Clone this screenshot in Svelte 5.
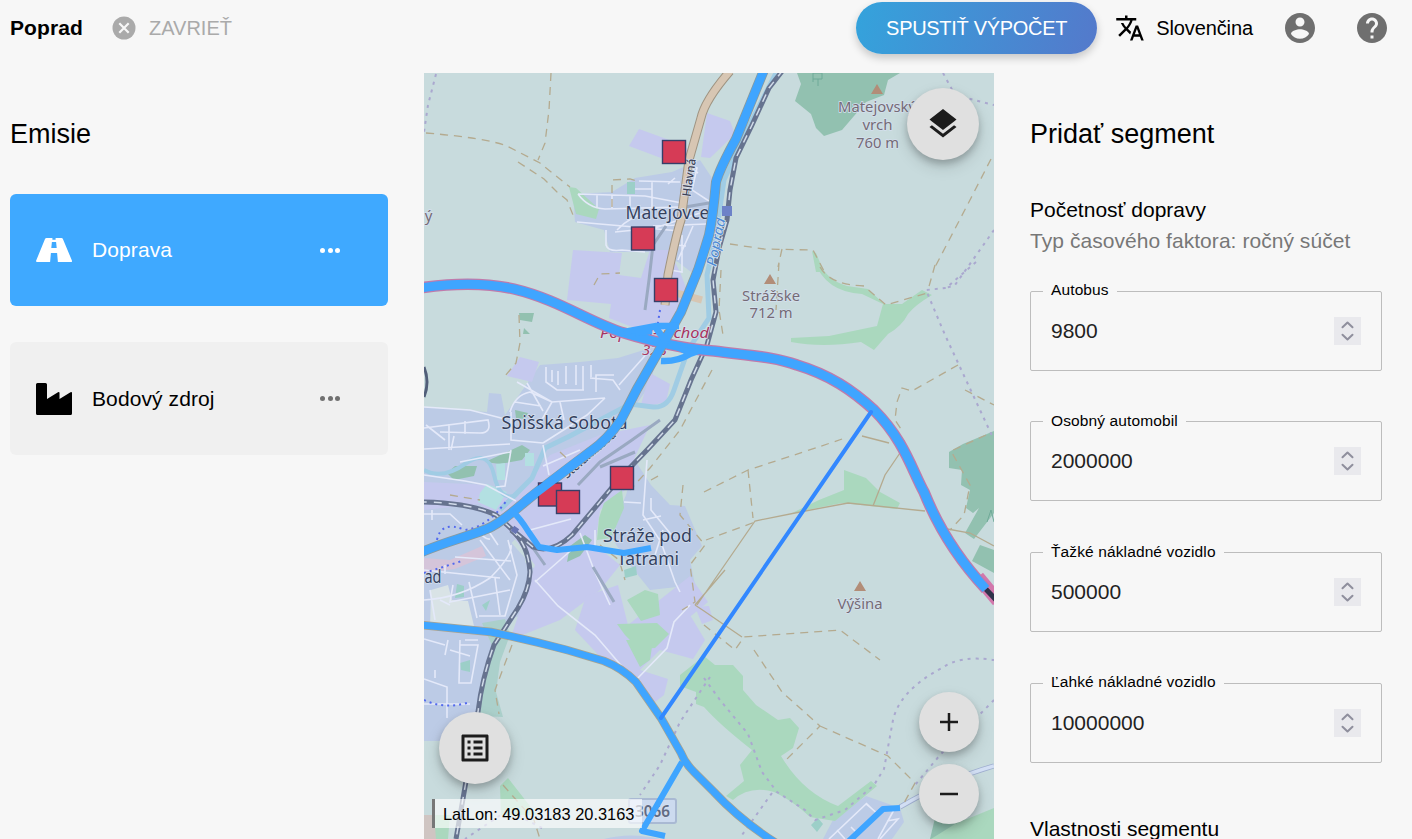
<script>
  const fields = [
    { label: 'Autobus', value: '9800' },
    { label: 'Osobný automobil', value: '2000000' },
    { label: 'Ťažké nákladné vozidlo', value: '500000' },
    { label: 'Ľahké nákladné vozidlo', value: '10000000' }
  ];
  const sources = [
    [674, 152], [643, 238.500], [666, 290], [550, 494.500], [568, 502], [622, 478]
  ];
  const ring = 'M420 288Q474 280 514 289C560 300 590 323 624 333C650 341 690 350 714 351C754 356 775 357 797 365C830 375 852 390 874 410C904 440 912 470 924 492C938 527 958 559 986 589';
  const mainRoad = 'M764 70L736 139Q720 168 716 182Q713 216 709 235Q703 255 698 270L681 312L664 342L637 389L621 420Q607 440 591 451L541 489C520 505 500 525 484 530C460 539 445 542 422 552';
  const southRoad = 'M422 625L491 632Q530 640 567 650L604 661Q622 668 636 682L661 718L681 753Q685 763 694 772L714 792Q740 820 776 843';
  const railNorth = 'M783 70L769 88L752 125L736 158L730 190L727 220L719 248L713 280L716 312L707 345L691 380L675 420L647 450L620 478L572 535Q552 554 533 547L516 533L496 515Q470 503 424 502';
  const railSouth = 'M511 530Q528 543 530 572Q529 590 518 608L494 645Q482 678 478 712L456 839';
</script>

<div class="page">
  <header>
    <strong class="city">Poprad</strong>
    <button class="close">
      <svg width="24" height="24" viewBox="0 0 24 24"><circle cx="12" cy="12" r="11.500" fill="#aaa"/><path d="m7.300 7.300 9.400 9.400m0-9.400-9.400 9.400" stroke="#f7f7f7" stroke-width="2.200"/></svg>
      <span>ZAVRIEŤ</span>
    </button>
    <button class="run"><span>SPUSTIŤ VÝPOČET</span></button>
    <button class="language">
      <svg width="30" height="30" viewBox="0 0 24 24"><path d="m12.870 15.070-2.540-2.510.03-.03c1.740-1.940 2.980-4.170 3.710-6.530H17V4h-7V2H8v2H1v1.990h11.170C11.500 7.920 10.440 9.750 9 11.350 8.070 10.320 7.300 9.190 6.690 8h-2c.73 1.630 1.730 3.170 2.980 4.560l-5.090 5.020L4 19l5-5 3.110 3.110.76-2.040zM18.500 10h-2L12 22h2l1.120-3h4.750L21 22h2l-4.500-12zm-2.620 7 1.620-4.330L19.120 17h-3.240z"/></svg>
      <span>Slovenčina</span>
    </button>
    <button class="account"><svg width="36" height="36" viewBox="0 0 24 24"><path fill="#6f6f6f" d="M12 2C6.480 2 2 6.480 2 12s4.480 10 10 10 10-4.480 10-10S17.520 2 12 2zm0 3c1.660 0 3 1.340 3 3s-1.340 3-3 3-3-1.340-3-3 1.340-3 3-3zm0 14.200c-2.500 0-4.710-1.280-6-3.220.03-1.990 4-3.080 6-3.080 1.990 0 5.970 1.090 6 3.080-1.290 1.940-3.500 3.220-6 3.220z"/></svg></button>
    <button class="help"><svg width="36" height="36" viewBox="0 0 24 24"><path fill="#6f6f6f" d="M12 2C6.480 2 2 6.480 2 12s4.480 10 10 10 10-4.480 10-10S17.520 2 12 2zm1 17h-2v-2h2v2zm2.070-7.750-.9.920C13.450 12.900 13 13.500 13 15h-2v-.5c0-1.100.45-2.100 1.170-2.830l1.240-1.260c.37-.36.59-.86.59-1.410 0-1.100-.9-2-2-2s-2 .9-2 2H8c0-2.210 1.790-4 4-4s4 1.790 4 4c0 .88-.36 1.680-.93 2.250z"/></svg></button>
  </header>

  <main>
    <aside class="left">
      <h2>Emisie</h2>
      <div class="card active">
        <svg width="36" height="28" viewBox="0 0 36 28"><path fill="#fff" d="M10.500 2h15q1 0 1.400 1l9 21.500q.5 1.500-1 1.500H1.200q-1.700 0-1-1.500L9 3q.5-1 1.500-1z"/><path fill="#3fa9ff" d="M16.400 2h3.200v1.700h-3.200zM15.900 6h4.200l.6 6h-5.400zM14.900 17h6.200l.8 9h-7.800z"/></svg>
        <span class="name">Doprava</span>
        <span class="dots"><i></i><i></i><i></i></span>
      </div>
      <div class="card second">
        <svg width="36" height="32" viewBox="0 0 36 32"><path d="M1.500 0h8q1.500 0 1.500 1.500V16l11-6.800q1.500-.8 1.500.8v6l11-6.800q1.500-.8 1.500.8v20.500q0 1.500-1.500 1.500h-33Q0 32 0 30.500v-29Q0 0 1.500 0z"/></svg>
        <span class="name">Bodový zdroj</span>
        <span class="dots"><i></i><i></i><i></i></span>
      </div>
    </aside>

    <section class="map">
      <svg class="canvas" viewBox="424 73 570 766" width="570" height="766">
        <rect x="424" y="73" width="570" height="766" fill="#c8dbdd"/>

        <!-- built-up districts -->
        <g fill="#bccbe6">
          <path d="M573 194L612 192L635 178L672 172L700 160L720 190L712 245L695 275L678 262L650 252H610L604 230L575 222Z"/>
          <path d="M424 407L487 412L489 393L501 394L505 415L540 365L580 362L618 358L660 345L650 385L625 420L580 470L505 550L545 575L525 615L424 637Z"/>
          <path d="M424 540L500 530L525 558L527 600L490 655L478 715L440 741L424 741Z"/>
          <path d="M636 462L651 485L670 505L685 506L702 546L690 560L695 585L650 590L626 560L610 535L626 495Z"/>
          <path d="M823 839L834 818L866 796L900 808L904 822L892 839Z"/><path d="M604 839Q630 832 660 839Z"/>
        </g>
        <g fill="#c5c9ee">
          <path d="M639 129L672 141L690 150L688 165L661 158L629 146Z"/><path d="M707 113L730 121L735 134L710 158L701 157Z"/>
          <path d="M573 250L622 253L619 275L641 278L650 250L669 250L680 272L687 290L672 330L640 330L609 318L611 304L567 300Z"/>
          <path d="M520 357L539 362L532 382L507 376Z"/><path d="M650 373L670 384L666 402L640 408Z"/>
          <path d="M424 482L490 485L515 500L550 455L600 435L650 425L635 457L625 490L600 510L595 545L620 565L600 590L560 620L510 640L535 565L508 530L480 504L424 510Z"/>
          <path d="M586 596L618 585L628 625L690 576L708 602L680 625L655 650L690 615L705 640L693 659L660 650L640 670L668 679L664 695L655 702L635 678L604 661L575 630Z"/>
          <path d="M695 607L709 606L713 620L702 624Z"/>
        </g>

        <!-- vegetation -->
        <g fill="#92c1b0">
          <path d="M797 73H900L888 80L884 95L866 102L854 116L842 130L824 136L816 128L811 114L795 101L801 84Z"/>
          <path d="M994 431L963 444L949 452L949 468L962 470L961 485L970 490L966 508L973 513L979 508L965 533L974 539L994 513Z"/><path d="M980 545L994 550V573L972 561Z"/>
          <path d="M519 313H534L532 322L520 320ZM524 328L530 334H523ZM515 410L528 413L525 419L516 418ZM485 462L522 445L530 450L522 460L500 464ZM447 473L455 466L477 466L474 476L454 480ZM570 546L585 535L592 540L580 556L567 562Z"/>
          <path d="M930 839L935 818L970 820L980 839Z"/>
        </g>
        <path fill="#abd0cb" d="M482 623L505 619L510 635L500 662L496 692L503 717L480 716L478 700L494 650Z"/>
        <g fill="#aad8be">
          <path d="M814 260H818Q826 280 847 286L868 289L884 304L902 304L922 290L932 295Q915 305 908 314Q902 326 888 334L874 350L861 342Q822 348 791 342V338L829 336L877 326L883 304L862 294Q825 292 814 260Z"/>
          <path d="M792 513L819 500L844 490L844 470L866 478L880 492L900 503L897 509L842 503Z"/>
          <path d="M812 251L816 253L824 272H816ZM569 187L576 188L599 209L596 219L576 214Z"/>
          <path d="M604 503L622 490L624 508L611 538L597 540L599 518ZM627 600L645 590L658 594L660 615L641 621ZM617 624L657 623L669 634L655 648L639 649L625 635ZM626 640L653 640L650 660L640 667Z"/>
          <path d="M680 675L704 656L715 665L733 665L743 676L743 690L756 705L778 720L790 718L799 728L793 748L781 756Q803 793 838 806L871 781L877 786L835 821L810 817Q792 800 774 792Q750 785 733 800L726 796L744 781L740 765L752 750Q720 725 704 707L696 704V692L680 686Z"/>
          <path d="M500 786L508 778L537 815H501ZM424 815H450L448 839H424ZM931 839L955 824L994 808V839Z"/>
        </g>
        <g fill="#9ccfc8"><path d="M627 182H635V194H627ZM624 570L636 566L637 575L625 578ZM811 825L818 818L823 824L817 832ZM457 584L464 586V597L455 598ZM482 605L490 600L486 611ZM460 663L470 660V672L461 670Z"/><path fill="#b3e0e2" d="M480 493L487 484L507 492L496 510L478 502ZM496 464L505 463V480H497ZM525 453H534V466H525Z"/></g>
        <path fill="#d9e3e6" d="M431 590L448 585L452 600L468 601L474 626L430 628Z"/><path fill="#d5c5da" d="M424 558L450 560L482 546L486 556L455 569L424 573Z"/>
        <path fill="#cfc5c2" d="M424 815H434L436 839H424Z"/>

        <!-- waterways -->
        <g fill="none" stroke="#a0cce4">
          <path stroke-width="5" d="M776 73L748 128L724 180L716 235L707 275L709 318L688 350L674 390Q668 408 653 407L630 404L600 420L570 436L545 448L532 478L500 510"/>
          <path stroke-width="4" d="M424 470Q442 480 465 464T494 475T516 495"/>
        </g>

        <!-- streets -->
        <g fill="none" stroke="#e4e9f9" stroke-width="1.600">
          <path d="M578 194L645 196L682 203M578 194Q588 208 605 209L680 207M597 195V208M612 195V208M639 181L680 182M630 196V208M652 182V207M635 189H652M668 184L675 178M690 155L688 166L698 173M577 222L680 231M617 230Q630 216 650 212M606 230V245Q608 252 622 250L645 252M653 226L707 224M693 226L678 260M682 235V272L670 270M675 245L686 246M684 182V203M690 165L697 168L692 190L715 205M615 232L655 228L700 213"/>
          <path d="M517 382L552 402L605 398M546 367V382L557 390H584M552 382V370M558 385V371M566 384V366M576 385V365M583 390V366M591 377V365M596 392V375H614M590 378L613 380L620 390M650 350L619 385M605 398L587 415L543 443M510 412Q515 395 530 392L552 402M515 402L541 406M552 402L540 423M560 402L564 420M511 412V440L543 443M424 407L470 410L505 419M424 428L488 420Q492 433 480 433L440 432M449 424V450M426 425L445 440M465 421V434M454 436L451 450M424 449L510 444M543 445L549 475M555 430L562 414M580 450L543 466M527 383L543 411"/>
          <path d="M424 475L465 481L486 485L516 501M511 450L505 486L496 487M460 462L510 452M530 530L571 519M424 514H450L462 525M424 600Q460 598 490 578Q513 555 511 545M480 540L510 580M455 557L511 561M445 565V574M453 585L450 602L510 590M469 582L477 618M479 616H505L517 575L508 540M495 578L500 615M430 590L435 620M424 570L500 578M488 530L498 545M432 510V520M478 530Q485 540 490 539"/>
          <path d="M535 580L558 606L595 635L625 670L640 681M535 582L576 546M580 533L594 570L610 605M647 460L643 515L661 542L675 582L680 592M624 502L641 503M651 498V510L674 538M643 520L661 516M655 555L663 530M595 530V546M690 605L674 622L667 648L635 681M440 600L450 605"/>
          <path d="M424 679L447 687V718M424 639L445 645M448 640L445 655M460 640L459 683H471L478 645H460M465 640H478M450 650L470 656M424 704H470M435 678V670"/>
          <path d="M829 839L866 804L877 813M837 830L845 839M866 803Q875 812 879 815M887 821L898 819L880 839M851 827L859 835M895 808L878 839"/>
        </g>
        <g fill="none"><path stroke="#9faecf" stroke-width="5" d="M900 807Q948 779 994 766"/><path stroke="#d2dff4" stroke-width="3.400" d="M900 807Q948 779 994 766"/></g>
        <g fill="none" stroke="#9aa9c1" stroke-width="3"><path d="M578 485L600 462L632 440L660 420M600 467L635 452M593 567L614 602M666 226L653 245L649 280L645 310M533 548L545 565M685 207L715 202"/></g>

        <!-- tracks and trails -->
        <g fill="none" stroke="#b4aa8f" stroke-width="1.300" stroke-dasharray="8 6">
          <path d="M426 133Q486 138 507 146L540 163L570 187M551 73L549 110L545 143L538 160M518 162L544 179L557 192L567 200L575 220M612 207V180L630 179L640 182"/>
          <path d="M730 244L764 249L813 250L824 271M782 249L778 267M991 159L970 200L934 269M779 263L776 310M721 270L719 310L723 335"/>
          <path d="M820 267Q830 285 864 286L886 305L927 293M935 265L928 290M958 365L912 391L902 388L897 402L895 420L903 432M704 492L748 470Q810 450 845 438M748 470L753 518M706 540L755 522M965 390L994 405M986 435L951 451L970 485L964 515L950 530M704 625L735 650L744 637L785 634L840 630L880 660M754 650L782 692L820 726L784 762M820 726L888 756L915 783L904 803"/>
          <path d="M519 315L520 343L516 363L505 376M712 370L680 430L650 468L630 490M651 480L660 475M683 485L680 515L705 545L690 565L695 602L682 610M600 545L619 560L625 580M512 645L495 690L499 714M503 785L534 820L540 839M594 285L600 274L620 273M560 452L574 465M450 495L480 500M563 470L575 462"/>
        </g>
        <g fill="none" stroke="#b4aa8f" stroke-width="1.300"><path d="M697 605L755 521L800 512L848 503L925 511M873 506L885 475L902 450M862 436L889 443M942 528L970 533L994 546M695 605L704 611L742 637M695 605L725 570"/></g>
        <g fill="none" stroke="#aaa8cf" stroke-width="2" stroke-dasharray="3 5"><path d="M436 74L428 105L424 132M943 73L955 95L994 105M994 230L955 285L946 288M976 262L946 288L926 290L945 335L966 380L994 440M704 678L720 700L748 734L762 772L777 792L805 810L815 820L845 810L874 785L884 769L893 720Q900 690 942 668Q960 655 994 660M994 700L940 755L915 785M772 793L742 835M710 677L680 722L660 765L640 795M542 828L508 810L465 839"/></g>
        <path fill="none" stroke="#5269ee" stroke-width="2" stroke-dasharray="2 4" d="M437 540Q441 520 465 530Q488 527 507 500M424 573L462 561M424 700Q445 710 470 702M660 310L656 335"/>

        <!-- railways -->
        <g fill="none"><path d={railNorth} stroke="#66738f" stroke-width="5"/><path d={railSouth} stroke="#66738f" stroke-width="5"/><path d={railNorth} stroke="#d2dcea" stroke-width="1.500" stroke-dasharray="8 7"/><path d={railSouth} stroke="#d2dcea" stroke-width="1.500" stroke-dasharray="8 7"/><path d="M424 367Q430 382 424 397" stroke="#515e79" stroke-width="3"/></g>
        <g fill="none"><path stroke="#9f9482" stroke-width="9" d="M730 71Q705 100 701 118L689 160L681 220Q676 235 668 275L665 305"/><path stroke="#d7c6b3" stroke-width="7" d="M730 71Q705 100 701 118L689 160L681 220Q676 235 668 275L665 305M665 290L702 300"/></g>

        <rect x="722" y="206" width="10" height="10" fill="#6d82c8"/><rect x="512" y="527" width="6" height="6" fill="#6674b2" transform="rotate(35 515 530)"/>
        <rect x="629" y="799" width="47" height="24" rx="2" fill="#ccdaef" stroke="#a9b9d3" stroke-width="2"/>
        <g fill="#b28d78"><path d="M871 94L877 84L883 94ZM764 284L770 274L776 284ZM854 591L860 581L866 591Z"/></g>
        <path d="M813 82V73H822V79H813M818 79V86M987 522L991 510L994 522" fill="none" stroke="#6faa98"/>

        <g class="place" text-anchor="middle">
          <text x="667.500" y="218.500" textLength="84" lengthAdjust="spacingAndGlyphs">Matejovce</text>
          <text x="564.500" y="429" textLength="126" lengthAdjust="spacingAndGlyphs">Spišská Sobota</text>
          <text x="647.500" y="542" textLength="89" lengthAdjust="spacingAndGlyphs">Stráže pod</text>
          <text x="648" y="565" textLength="62" lengthAdjust="spacingAndGlyphs">Tatrami</text>
          <text x="424.500" y="583" text-anchor="start" textLength="17" lengthAdjust="spacingAndGlyphs">ad</text>
        </g>
        <g class="peak" text-anchor="middle">
          <text x="877" y="112" textLength="78" lengthAdjust="spacingAndGlyphs">Matejovský</text><text x="877.500" y="130">vrch</text><text x="877.500" y="148" textLength="43" lengthAdjust="spacingAndGlyphs">760 m</text>
          <text x="771" y="301" textLength="58" lengthAdjust="spacingAndGlyphs">Strážske</text><text x="771" y="318" textLength="43" lengthAdjust="spacingAndGlyphs">712 m</text>
          <text x="860" y="609" textLength="45" lengthAdjust="spacingAndGlyphs">Výšina</text><text x="428.500" y="221">ý</text>
        </g>
        <g class="junction"><text x="600" y="338" textLength="109" lengthAdjust="spacingAndGlyphs">Poprad-východ</text><text x="642" y="355">328</text></g>
        <text class="shield" x="635" y="817" textLength="35" lengthAdjust="spacingAndGlyphs">3066</text>
        <text class="street" transform="translate(690.500 197) rotate(-82)" textLength="38" lengthAdjust="spacingAndGlyphs">Hlavná</text>
        <text class="street" transform="translate(567 479) rotate(-41)" textLength="66" lengthAdjust="spacingAndGlyphs">Štefánikova</text>
        <text class="river" transform="translate(716 267) rotate(-79)" textLength="49" lengthAdjust="spacingAndGlyphs">Poprad</text>

        <!-- traffic emission lines -->
        <g fill="none">
          <path d="M978 577L998 601" stroke="#d278ac" stroke-width="13"/><path d="M982 585L998 602" stroke="#30334b" stroke-width="5"/>
          <path d={ring} stroke="#bf7bac" stroke-width="11.500"/>
          <path d={mainRoad} stroke="#899a9d" stroke-width="10"/>
          <path d={southRoad} stroke="#aaa38f" stroke-width="8.500"/>
          <g stroke="#3fa5ff"><path d={ring} stroke-width="9"/><path d={mainRoad} stroke-width="8.500"/><path d={southRoad} stroke-width="7"/>
            <path stroke-width="6.500" d="M624 332L656 326H679M656 328L666 342M661 361Q677 362 690 354L704 349M673 345L688 352M652 331L635 333"/>
            <path stroke-width="6" d="M512 511Q520 518 528 531L539 547L557 550L587 547L624 553L651 548M682 762L642 831L665 836M849 841L883 809L900 808" stroke-linejoin="round"/>
          </g>
        </g>
        {#each sources as [x, y], i}
          <rect x={x - 11.500} y={y - 11.500} width="23" height="23" fill="#d63b56" stroke="#363f68" stroke-width="1.400"/>
          {#if i === 3}<path d="M579 460L541 489L525 501" fill="none" stroke="#3fa5ff" stroke-width="8.500"/>{/if}
        {/each}
        <path d="M871 412L661 718" stroke="#3388ff" stroke-width="4" stroke-linecap="round"/>
      </svg>

      <button class="round layers"><svg width="36" height="36" viewBox="0 0 24 24"><path fill="#1c1c1c" d="m11.990 18.540-7.370-5.730L3 14.070l9 7 9-7-1.630-1.270-7.380 5.740zM12 16l7.360-5.730L21 9l-9-7-9 7 1.630 1.270L12 16z"/></svg></button>
      <button class="round legend-button"><svg width="36" height="36" viewBox="0 0 24 24"><path fill="#1c1c1c" d="M19 5v14H5V5h14m1.100-2H3.900c-.5 0-.9.400-.9.900v16.200c0 .4.400.9.900.9h16.200c.4 0 .9-.5.900-.9V3.900c0-.5-.5-.9-.9-.9zM11 7h6v2h-6V7zm0 4h6v2h-6v-2zm0 4h6v2h-6v-2zM7 7h2v2H7V7zm0 4h2v2H7v-2zm0 4h2v2H7v-2z"/></svg></button>
      <button class="round plus"><svg width="30" height="30" viewBox="0 0 30 30"><path d="M15 6v18M6 15h18" stroke="#1c1c1c" stroke-width="2.500"/></svg></button>
      <button class="round minus"><svg width="30" height="30" viewBox="0 0 30 30"><path d="M6 15h18" stroke="#1c1c1c" stroke-width="2.500"/></svg></button>
      <div class="position">LatLon: 49.03183 20.3163</div>
    </section>

    <aside class="right">
      <h2>Pridať segment</h2>
      <h3>Početnosť dopravy</h3>
      <p>Typ časového faktora: ročný súčet</p>
      {#each fields as field}
        <fieldset>
          <legend>{field.label}</legend>
          <div class="number"><span>{field.value}</span>
            <svg width="27" height="28" viewBox="0 0 27 28"><rect width="27" height="28" fill="#e9e9ed"/><path d="m8.500 10.300 5-4.800 5 4.800M8.500 17.700l5 4.800 5-4.800" fill="none" stroke="#8f8f9d" stroke-width="2" stroke-linecap="round" stroke-linejoin="round"/></svg>
          </div>
        </fieldset>
      {/each}
      <h3 class="properties">Vlastnosti segmentu</h3>
    </aside>
  </main>
</div>

<style>
  :global(body) { margin: 0; overflow: hidden; }
  .page { width: 1412px; height: 839px; overflow: hidden; background: #f7f7f7; color: #000; font-family: "Liberation Sans", Arial, sans-serif; font-size: 21px; }
  button { font: inherit; color: inherit; border: 0; padding: 0; background: none; display: flex; align-items: center; justify-content: center; white-space: nowrap; }
  header { height: 73px; display: flex; align-items: flex-start; }
  .city { width: 102px; padding-left: 10px; line-height: 56px; letter-spacing: .1px; }
  .close { height: 56px; gap: 13px; color: #aaa; font-size: 20px; }
  .run { width: 241px; height: 52px; margin: 2px 0 0 auto; border-radius: 26px; color: #fff; font-size: 20px; letter-spacing: -.3px; background: linear-gradient(105deg, #34a3dc, #5479cb); box-shadow: 0 4px 8px #0003; }
  .language { height: 56px; margin-left: 18px; gap: 11px; font-size: 20px; letter-spacing: -.1px; }
  .account { height: 56px; margin-left: 29px; }
  .help { height: 56px; margin: 0 22px 0 36px; }
  main { height: 766px; display: grid; grid-template-columns: 424px 570px 418px; }
  h2 { margin: 0; font-size: 27px; font-weight: 400; line-height: 32px; }
  .left { padding: 45px 36px 0 10px; }
  .card { box-sizing: border-box; height: 112px; padding: 0 48px 0 26px; display: flex; align-items: center; border-radius: 6px; background: #f0f0f0; }
  .card.active { margin: 44px 0 36px; background: #3fa9ff; color: #fff; }
  .card.second { height: 113px; }
  .second .name { padding-top: 1px; }
  .name { margin-left: 20px; letter-spacing: .1px; }
  .dots { display: flex; gap: 2.500px; margin-left: auto; color: #707070; }
  .active .dots { color: #fff; }
  .dots i { width: 5px; height: 5px; border-radius: 50%; background: currentColor; }
  .map { position: relative; overflow: hidden; }
  .canvas { display: block; font-family: "Noto Sans", sans-serif; }
  text { paint-order: stroke; stroke: #d5e0ef; stroke-width: 1.500px; }
  .place { fill: #34405e; font-size: 18px; }
  .peak { fill: #746b75; font-size: 15px; }
  .junction { fill: #a7345e; font-size: 15px; font-style: italic; }
  .shield { fill: #626b83; font-size: 16px; font-weight: 600; }
  .street { fill: #3f4256; font-size: 12px; font-weight: 500; }
  .river { fill: #4c8bd5; font-size: 14px; font-style: italic; }
  .round { position: absolute; width: 72px; height: 72px; border-radius: 50%; background: #e0e0e0; box-shadow: 0 4px 7px #0003, 0 7px 16px #0002; }
  .layers { right: 15px; top: 15px; }
  .legend-button { left: 15px; top: 639px; }
  .plus, .minus { width: 60px; height: 60px; right: 15px; top: 619px; }
  .minus { top: 691px; }
  .position { position: absolute; left: 8px; top: 726px; box-sizing: border-box; width: 210px; height: 29px; border-left: 3px solid #777; padding-left: 8px; background: #ffffffa6; font-size: 16.400px; line-height: 31px; white-space: nowrap; }
  .right { padding: 45px 30px 0 36px; overflow: hidden; }
  .right h2 { margin-bottom: 47px; }
  h3 { margin: 0; font-size: 21px; font-weight: 400; line-height: 26px; }
  p { margin: 5px 0 28px; font-size: 21px; line-height: 26px; letter-spacing: .05px; color: #777; white-space: nowrap; }
  fieldset { box-sizing: border-box; height: 88.500px; margin: 0 0 42.300px; padding: 0 20px 0 12px; border: 1px solid #bdbdbd; border-radius: 2px; }
  legend { height: 18px; padding: 0 8px; font-size: 15.500px; line-height: 15px; letter-spacing: .12px; }
  .number { height: 61px; padding-left: 8px; display: flex; align-items: center; justify-content: space-between; color: #222; }
  .properties { margin-top: 53.500px; }
</style>
